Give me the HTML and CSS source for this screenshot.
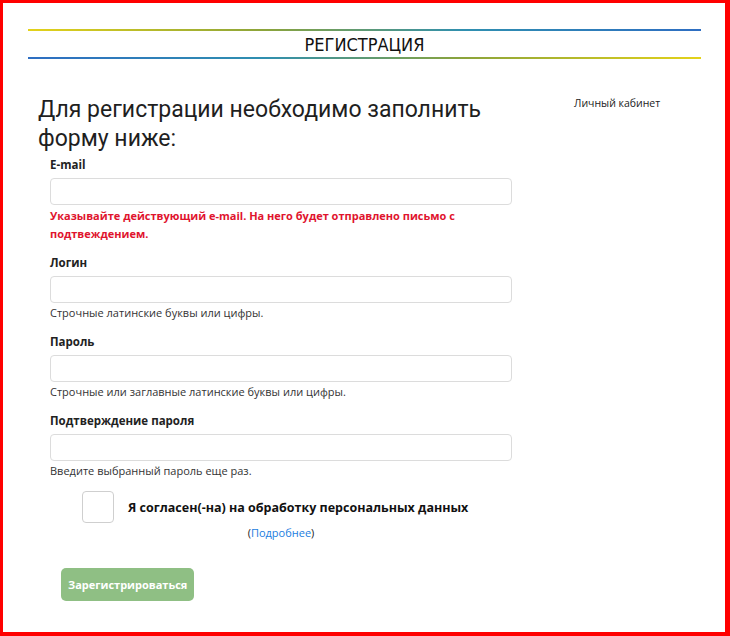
FILE: index.html
```html
<!DOCTYPE html>
<html lang="ru">
<head>
  <meta charset="UTF-8">
  <meta name="viewport" content="width=device-width, initial-scale=1.0">
  <title>Регистрация</title>
  <link rel="stylesheet" href="styles.css">
</head>
<body>

  <div class="page">
    <div class="page-title">
      <div class="line line-top"></div>
      <h2>РЕГИСТРАЦИЯ</h2>
      <div class="line line-bottom"></div>
    </div>

    <div class="content">
      <div class="main-col">
        <h1>Для регистрации необходимо заполнить форму ниже:</h1>

        <form class="reg-form" onsubmit="return false">
          <div class="form-group">
            <label for="email">E-mail</label>
            <input type="text" id="email">
            <p class="hint hint-warn">Указывайте действующий e-mail. На него будет отправлено письмо с подтвеждением.</p>
          </div>

          <div class="form-group">
            <label for="login">Логин</label>
            <input type="text" id="login">
            <p class="hint">Строчные латинские буквы или цифры.</p>
          </div>

          <div class="form-group">
            <label for="pass">Пароль</label>
            <input type="password" id="pass">
            <p class="hint">Строчные или заглавные латинские буквы или цифры.</p>
          </div>

          <div class="form-group">
            <label for="pass2">Подтверждение пароля</label>
            <input type="password" id="pass2">
            <p class="hint">Введите выбранный пароль еще раз.</p>
          </div>

          <div class="agree">
            <div class="agree-row">
              <input type="checkbox" id="agree" class="agree-box">
              <label for="agree">Я согласен(-на) на обработку персональных данных</label>
            </div>
            <div class="agree-more">(<a href="#">Подробнее</a>)</div>
          </div>

          <button type="submit" class="reg-btn" disabled>Зарегистрироваться</button>
        </form>
      </div>

      <div class="side-col">
        <a href="#" class="cabinet-link">Личный кабинет</a>
      </div>
    </div>
  </div>

</body>
</html>
```

FILE: styles.css
```css
html, body {
  margin: 0;
  padding: 0;
}

body {
  font-family: "Open Sans", "Noto Sans", sans-serif;
  color: #222;
  background-color: #fff;
}

.page {
  box-sizing: border-box;
  width: 730px;
  height: 636px;
  border: 4px solid #f00;
  border-left-width: 3px;
  border-top-width: 3px;
  border-right-width: 5px;
  padding: 25px 24px 0 25px;
  overflow: hidden;
}

/* заголовок страницы между двумя цветными линиями */
.page-title h2 {
  margin: 0;
  height: 26px;
  line-height: 27px;
  text-align: center;
  font-family: "Liberation Sans Narrow", "DejaVu Sans Condensed", sans-serif;
  font-weight: normal;
  font-size: 18px;
  color: #111;
}

.line {
  height: 2px;
}

.line-top {
  margin-top: 1px;
  background: linear-gradient(to right, #e4d21a, #8ca43a 35%, #2f8fb0 65%, #2e6ec2);
}

.line-bottom {
  background: linear-gradient(to right, #2e6ec2, #2f8fb0 35%, #8ca43a 65%, #e4d21a);
}

.content {
  display: grid;
  grid-template-columns: 546px 1fr;
  padding-top: 36px;
}

.main-col h1 {
  max-width: 470px;
  margin: 0 0 3px 10px;
  font-family: Roboto, "Open Sans", sans-serif;
  font-size: 23px;
  font-weight: normal;
  line-height: 29px;
  color: #1f1f1f;
}

.reg-form {
  padding-left: 22px;
  width: 462px;
}

.form-group {
  margin-bottom: 11px;
}

.form-group label {
  display: block;
  font-size: 11.5px;
  font-weight: bold;
  line-height: 18px;
  margin-bottom: 4px;
}

.form-group input {
  box-sizing: border-box;
  display: block;
  width: 100%;
  height: 27px;
  border: 1px solid #dcdcdc;
  border-radius: 4px;
  padding: 4px 8px;
  font: inherit;
}

.hint {
  margin: 1px 0 0;
  font-size: 11px;
  line-height: 18px;
  color: #333;
}

.hint-warn {
  margin-top: 2px;
  color: #e0142e;
  font-weight: bold;
}

.agree-row {
  display: flex;
  align-items: center;
  gap: 14px;
  padding-left: 32px;
}

.agree-box {
  appearance: none;
  -webkit-appearance: none;
  margin: 0;
  width: 32px;
  height: 32px;
  border: 1px solid #cfcfcf;
  border-radius: 4px;
  background: #fff;
}

.agree-row label {
  font-size: 12.5px;
  font-weight: bold;
  color: #111;
}

.agree-more {
  text-align: center;
  font-size: 11px;
  line-height: 16px;
  margin-top: 2px;
  padding-left: 56px;
  width: 350px;
}

.agree-more a {
  color: #1a7de0;
  text-decoration: none;
}

.reg-btn {
  margin: 27px 0 0 11px;
  height: 33px;
  padding: 0 7px;
  border: none;
  border-radius: 5px;
  background-color: #8fbf84;
  color: #fff;
  font: inherit;
  font-size: 11px;
  font-weight: bold;
}

.cabinet-link {
  display: block;
  font-size: 10.5px;
  line-height: 16px;
  color: #222;
  text-decoration: none;
}
```
